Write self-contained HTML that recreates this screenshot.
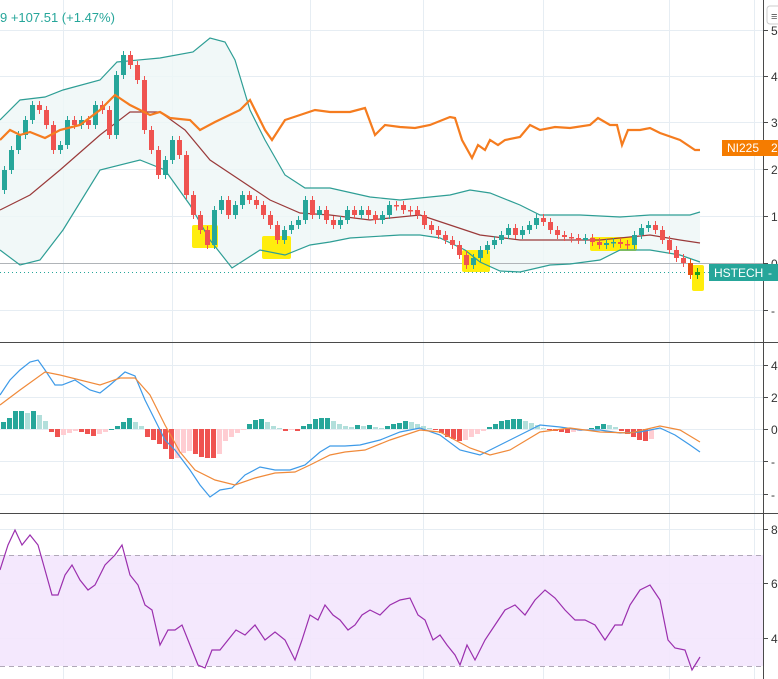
<!DOCTYPE html>
<html><head><meta charset="utf-8"><style>
html,body{margin:0;padding:0;background:#fff;width:778px;height:679px;overflow:hidden;font-family:"Liberation Sans",sans-serif}
svg{display:block}
</style></head><body>
<svg id="s" width="778" height="679" xmlns="http://www.w3.org/2000/svg" font-family="Liberation Sans, sans-serif">
<g stroke="#e6edf3" stroke-width="1">
<line x1="63.5" y1="0" x2="63.5" y2="679"/><line x1="172.5" y1="0" x2="172.5" y2="679"/><line x1="310.5" y1="0" x2="310.5" y2="679"/><line x1="423.5" y1="0" x2="423.5" y2="679"/><line x1="543.5" y1="0" x2="543.5" y2="679"/><line x1="669.5" y1="0" x2="669.5" y2="679"/><line x1="754.5" y1="0" x2="754.5" y2="679"/>
<line x1="0" y1="30.5" x2="763" y2="30.5"/><line x1="0" y1="76.5" x2="763" y2="76.5"/><line x1="0" y1="122.5" x2="763" y2="122.5"/><line x1="0" y1="169.5" x2="763" y2="169.5"/><line x1="0" y1="216.5" x2="763" y2="216.5"/><line x1="0" y1="310.5" x2="763" y2="310.5"/>
<line x1="0" y1="365.5" x2="763" y2="365.5"/><line x1="0" y1="397.5" x2="763" y2="397.5"/><line x1="0" y1="429.5" x2="763" y2="429.5"/><line x1="0" y1="461.5" x2="763" y2="461.5"/><line x1="0" y1="494.5" x2="763" y2="494.5"/>
<line x1="0" y1="529.5" x2="763" y2="529.5"/><line x1="0" y1="583.5" x2="763" y2="583.5"/><line x1="0" y1="638.5" x2="763" y2="638.5"/>
</g>
<!-- RSI band -->
<rect x="0" y="555" width="763" height="111" fill="#f3e5fd" opacity="0.9"/>
<line x1="0" y1="555.5" x2="763" y2="555.5" stroke="#b0a8b8" stroke-dasharray="5,4"/>
<line x1="0" y1="666.5" x2="763" y2="666.5" stroke="#b0a8b8" stroke-dasharray="5,4"/>
<!-- bollinger fill -->
<polygon id="bb" fill="#eef6f6" opacity="0.8"/>
<line x1="0" y1="263.5" x2="763" y2="263.5" stroke="#b0b4b8"/>
<line x1="0" y1="272.5" x2="763" y2="272.5" stroke="#26a69a" stroke-dasharray="1,3"/>
<g fill="#ffec00" opacity="0.95">
<rect x="192" y="225" width="26" height="23" rx="2"/><rect x="262" y="236" width="29" height="23" rx="2"/><rect x="462" y="250" width="28" height="22" rx="2"/><rect x="590" y="237" width="47" height="14" rx="2"/><rect x="692" y="265" width="12" height="26" rx="2"/>
</g>
<polyline id="up" fill="none" stroke="#2e9e95" stroke-width="1.2"/>
<polyline id="lo" fill="none" stroke="#2e9e95" stroke-width="1.2"/>
<polyline id="mid" fill="none" stroke="#9a3a3a" stroke-width="1.2"/>
<g id="candles"></g>
<polyline id="ni" fill="none" stroke="#f57c1f" stroke-width="2.2"/>
<g id="hist"></g>
<polyline id="macd" fill="none" stroke="#3d9ae8" stroke-width="1.2"/>
<polyline id="sig" fill="none" stroke="#f08a3a" stroke-width="1.2"/>
<polyline id="rsi" fill="none" stroke="#9b2fae" stroke-width="1.2"/>
<line x1="0" y1="342.5" x2="778" y2="342.5" stroke="#4a4a4a"/>
<line x1="0" y1="513.5" x2="778" y2="513.5" stroke="#4a4a4a"/>
<line x1="763.5" y1="0" x2="763.5" y2="679" stroke="#4a4a4a"/>
<g stroke="#4a4a4a">
<line x1="763" y1="30.5" x2="768" y2="30.5"/><line x1="763" y1="76.5" x2="768" y2="76.5"/><line x1="763" y1="122.5" x2="768" y2="122.5"/><line x1="763" y1="169.5" x2="768" y2="169.5"/><line x1="763" y1="216.5" x2="768" y2="216.5"/><line x1="763" y1="263.5" x2="768" y2="263.5"/><line x1="763" y1="310.5" x2="768" y2="310.5"/>
<line x1="763" y1="365.5" x2="768" y2="365.5"/><line x1="763" y1="397.5" x2="768" y2="397.5"/><line x1="763" y1="429.5" x2="768" y2="429.5"/><line x1="763" y1="461.5" x2="768" y2="461.5"/><line x1="763" y1="494.5" x2="768" y2="494.5"/>
<line x1="763" y1="529.5" x2="768" y2="529.5"/><line x1="763" y1="583.5" x2="768" y2="583.5"/><line x1="763" y1="638.5" x2="768" y2="638.5"/>
</g>
<g font-size="12" fill="#333">
<text x="771" y="35">5</text><text x="771" y="81">4</text><text x="771" y="127">3</text><text x="771" y="174">2</text><text x="771" y="221">1</text><text x="771" y="268">0</text><text x="771" y="315">-</text>
<text x="771" y="370">4</text><text x="771" y="402">2</text><text x="771" y="434">0</text><text x="771" y="466">-</text><text x="771" y="499">-</text>
<text x="771" y="534">8</text><text x="771" y="588">6</text><text x="771" y="643">4</text>
</g>
<rect x="767" y="6" width="14" height="18" rx="3" fill="#fff" stroke="#ccc"/>
<text x="771" y="20" font-size="11" fill="#555">≡</text>
<rect x="722" y="140" width="41" height="16" fill="#f57c00"/>
<text x="727" y="152" font-size="12" fill="#fff">NI225</text>
<rect x="763" y="140" width="15" height="16" fill="#f57c00"/>
<text x="771" y="152" font-size="12" fill="#fff">2</text>
<rect x="709" y="264" width="54" height="17" fill="#26a69a"/>
<text x="714" y="277" font-size="12" fill="#fff">HSTECH</text>
<rect x="763" y="264" width="15" height="17" fill="#26a69a"/>
<text x="768" y="277" font-size="12" fill="#fff">-</text>
<text x="0" y="22" font-size="13" fill="#26a69a">9  +107.51  (+1.47%)</text>
</svg>
<script>
function P(a){return a.map(p=>p.join(',')).join(' ')}
var up=[[0,120],[20,100],[45,97],[63,90],[100,80],[117,62],[160,58],[193,52],[210,38],[225,42],[235,60],[250,110],[265,140],[285,175],[305,188],[330,188],[370,197],[400,200],[420,198],[450,195],[470,190],[490,193],[520,205],[540,215],[580,215],[620,217],[650,215],[690,215],[700,212]];
var lo=[[0,250],[20,265],[40,260],[63,230],[100,170],[140,160],[165,170],[190,205],[210,240],[232,268],[260,250],[285,255],[310,245],[330,242],[350,238],[400,235],[420,235],[440,238],[465,250],[480,262],[500,271],[520,272],[550,265],[570,264],[600,260],[620,250],[650,250],[680,255],[700,262]];
var mid=[[0,210],[30,195],[60,170],[100,135],[130,112],[160,112],[185,130],[210,160],[240,180],[270,200],[300,213],[330,215],[370,220],[420,215],[450,225],[480,235],[520,240],[545,240],[600,240],[650,235],[680,240],[700,243]];
document.getElementById('up').setAttribute('points',P(up));
document.getElementById('lo').setAttribute('points',P(lo));
document.getElementById('mid').setAttribute('points',P(mid));
document.getElementById('bb').setAttribute('points',P(up.concat(lo.slice().reverse())));
document.getElementById('ni').setAttribute('points',P([[0,140],[10,130],[20,135],[30,132],[45,138],[60,130],[80,125],[100,110],[115,95],[130,105],[150,115],[160,112],[170,118],[190,120],[200,130],[215,122],[240,110],[250,100],[265,130],[272,140],[285,120],[300,115],[315,110],[330,112],[350,112],[365,108],[375,135],[385,125],[400,127],[415,128],[430,125],[450,117],[455,118],[462,140],[472,158],[478,145],[485,150],[490,140],[498,145],[505,140],[520,137],[530,125],[540,130],[555,127],[570,128],[590,125],[598,118],[610,125],[617,125],[622,145],[628,130],[640,130],[650,128],[660,133],[680,140],[695,150],[700,150]]));
var c=[190,170,150,135,120,105,110,125,150,145,120,125,120,125,105,110,135,75,55,65,80,130,150,175,160,140,155,195,215,230,245,210,200,215,205,195,200,205,215,225,240,230,225,220,200,215,210,220,225,220,210,215,210,215,220,215,205,205,210,210,215,225,230,235,240,245,255,265,258,250,245,240,235,228,235,230,225,218,222,230,235,237,238,240,238,242,245,243,242,244,245,235,228,225,230,240,250,258,263,275,272];
var h='';for(var i=1;i<c.length;i++){var x=i*7-7+2,o=c[i-1],cl=c[i];var g=cl<o;var col=g?'#26a69a':'#ef5350';if(i>=99)col=g?'#1b9e1b':'#e8500f';var t=Math.min(o,cl),b=Math.max(o,cl);if(b-t<1.5){b=t+1.5}
h+='<line x1="'+(x+2.5)+'" y1="'+(t-4)+'" x2="'+(x+2.5)+'" y2="'+(b+4)+'" stroke="'+col+'"/><rect x="'+x+'" y="'+t+'" width="5" height="'+(b-t)+'" fill="'+col+'"/>';}
document.getElementById('candles').innerHTML=h;
var hv=[7,11,18,18,16,18,14,8,-3,-8,-6,-4,-2,-3,-5,-7,-5,-3,0,3,7,11,7,3,-8,-11,-15,-20,-30,-29,-24,-22,-25,-28,-29,-29,-25,-12,-8,-4,-1,5,9,10,7,3,1,-2,-1,-2,3,5,10,11,11,8,5,3,2,4,3,4,2,1,3,5,6,8,7,5,3,1,-1,-4,-8,-10,-12,-11,-8,-5,-2,2,5,8,9,10,10,8,6,4,1,-1,-2,-3,-4,-3,-2,-1,1,3,5,4,2,-2,-5,-8,-11,-12,-10];
var hh='';for(var i=0;i<hv.length&&i*6<700;i++){var v=hv[i],p=i?hv[i-1]:0,x=i*6+1,col;if(v>=0)col=(v>=p)?'#26a69a':'#b2dfdb';else col=(v<=p)?'#ef5350':'#ffcdd2';var y=v>=0?429-v:429,hh2=Math.max(Math.abs(v),1);
hh+='<rect x="'+x+'" y="'+y+'" width="5" height="'+hh2+'" fill="'+col+'"/>';}
document.getElementById('hist').innerHTML=hh;
document.getElementById('macd').setAttribute('points',P([[0,395],[10,380],[20,370],[30,362],[38,360],[45,370],[55,385],[62,385],[75,380],[90,390],[100,393],[110,385],[125,372],[135,376],[145,400],[155,420],[165,440],[175,450],[190,470],[200,485],[210,497],[220,490],[232,488],[245,475],[260,467],[275,470],[290,470],[305,465],[320,452],[330,446],[345,446],[360,445],[380,440],[400,432],[420,428],[440,435],[460,450],[480,455],[500,445],[520,435],[540,425],[560,427],[580,430],[600,430],[620,433],[640,432],[660,428],[675,435],[690,445],[700,452]]));
document.getElementById('sig').setAttribute('points',P([[0,405],[20,390],[45,372],[60,375],[80,380],[100,385],[120,378],[135,378],[150,395],[165,425],[180,452],[195,470],[215,480],[235,485],[255,478],[275,473],[295,472],[310,465],[330,455],[345,452],[365,450],[390,440],[420,430],[440,432],[470,448],[490,455],[510,450],[540,432],[570,428],[600,432],[630,433],[660,426],[680,430],[700,442]]));
document.getElementById('rsi').setAttribute('points',P([[0,570],[8,545],[15,530],[22,545],[30,535],[38,545],[45,570],[52,595],[58,595],[65,575],[72,565],[80,580],[88,590],[95,585],[105,565],[115,555],[122,545],[130,575],[138,585],[145,605],[152,610],[160,645],[168,630],[175,630],[182,625],[190,645],[198,665],[205,668],[212,650],[220,650],[228,640],[236,630],[245,635],[255,625],[265,640],[275,632],[285,640],[295,660],[302,640],[310,615],[318,620],[325,605],[333,615],[340,620],[348,630],[355,625],[362,615],[370,610],[380,615],[390,605],[400,600],[410,598],[418,615],[425,620],[433,640],[440,635],[447,645],[455,655],[460,665],[467,645],[475,660],[485,640],[495,625],[505,610],[515,605],[525,615],[535,600],[545,590],[555,598],[565,610],[575,620],[585,620],[595,625],[605,640],[615,625],[622,625],[630,605],[640,590],[650,585],[660,600],[668,640],[675,648],[685,650],[692,670],[700,657]]));
</script>
</body></html>
